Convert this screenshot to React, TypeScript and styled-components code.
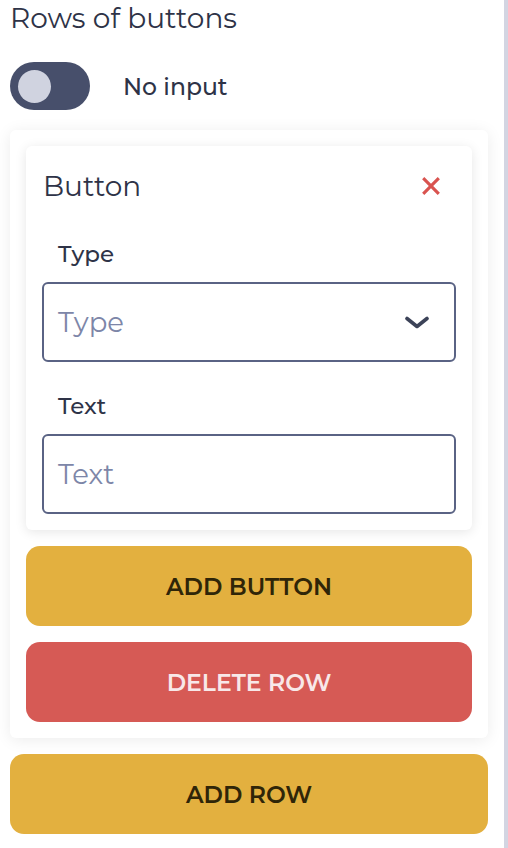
import React from "react";
import styled, { createGlobalStyle } from "styled-components";

const GlobalStyle = createGlobalStyle`
  html, body {
    margin: 0;
    padding: 0;
    background: #ffffff;
  }
  body {
    font-family: "Montserrat", "Open Sans", "DejaVu Sans", sans-serif;
    color: #2e3347;
  }
`;

interface IField {
  label: string;
  placeholder: string;
  select?: boolean;
}

const fields: IField[] = [
  { label: "Type", placeholder: "Type", select: true },
  { label: "Text", placeholder: "Text" },
];

export default function App() {
  const [noInput, setNoInput] = React.useState(false);

  return (
    <S.Page>
      <GlobalStyle />
      <S.Content>
        <S.Title>Rows of buttons</S.Title>
        <S.ToggleRow>
          <S.Toggle $on={noInput} onClick={() => setNoInput(!noInput)}>
            <S.Knob />
          </S.Toggle>
          <S.ToggleLabel>No input</S.ToggleLabel>
        </S.ToggleRow>
        <S.RowCard>
          <S.ButtonCard>
            <S.CardHeader>
              <S.CardTitle>Button</S.CardTitle>
              <S.CloseIcon viewBox="0 0 24 24">
                <path d="M3.5 3.5 L20.5 20.5 M20.5 3.5 L3.5 20.5" />
              </S.CloseIcon>
            </S.CardHeader>
            {fields.map((field) => (
              <S.Field key={field.label}>
                <S.FieldLabel>{field.label}</S.FieldLabel>
                <S.InputBox>
                  <S.Placeholder>{field.placeholder}</S.Placeholder>
                  {field.select && (
                    <S.Chevron viewBox="0 0 26 13">
                      <path d="M3 2.5 L13 10.5 L23 2.5" />
                    </S.Chevron>
                  )}
                </S.InputBox>
              </S.Field>
            ))}
          </S.ButtonCard>
          <S.ActionButton $variant="yellow">ADD BUTTON</S.ActionButton>
          <S.ActionButton $variant="red">DELETE ROW</S.ActionButton>
        </S.RowCard>
        <S.ActionButton $variant="yellow">ADD ROW</S.ActionButton>
      </S.Content>
    </S.Page>
  );
}

const S = {
  Page: styled.div`
    display: flex;
    min-height: 848px;
    border-right: 4px solid #d3d5e2;
    box-sizing: border-box;
    width: 508px;
  `,
  Content: styled.div`
    flex: 1;
    display: flex;
    flex-direction: column;
    padding: 0 16px 0 10px;
  `,
  Title: styled.h2`
    margin: 0;
    font-size: 28px;
    font-weight: 400;
    line-height: 36px;
    color: #2e3347;
  `,
  ToggleRow: styled.div`
    display: flex;
    align-items: center;
    gap: 33px;
    margin-top: 26px;
  `,
  Toggle: styled.div<{ $on: boolean }>`
    width: 80px;
    height: 48px;
    border-radius: 24px;
    background: #474f6b;
    display: flex;
    align-items: center;
    justify-content: ${(p) => (p.$on ? "flex-end" : "flex-start")};
    padding: 0 8px;
    box-sizing: border-box;
    cursor: pointer;
  `,
  Knob: styled.div`
    width: 33px;
    height: 33px;
    border-radius: 50%;
    background: #d0d3e0;
  `,
  ToggleLabel: styled.span`
    font-size: 23.5px;
    font-weight: 500;
    color: #2e3347;
  `,
  RowCard: styled.div`
    margin-top: 20px;
    background: #ffffff;
    border-radius: 6px;
    box-shadow: 0 2px 16px rgba(0, 0, 0, 0.08);
    padding: 16px;
    display: flex;
    flex-direction: column;
    gap: 16px;
    margin-bottom: 16px;
  `,
  ButtonCard: styled.div`
    background: #ffffff;
    border-radius: 6px;
    box-shadow: 0 2px 12px rgba(0, 0, 0, 0.1);
    padding: 16px 16px 16px 16px;
    display: flex;
    flex-direction: column;
  `,
  CardHeader: styled.div`
    display: flex;
    align-items: center;
    justify-content: space-between;
    padding: 0 14px 0 1px;
    height: 48px;
  `,
  CardTitle: styled.span`
    font-size: 28px;
    font-weight: 400;
    color: #2e3347;
  `,
  CloseIcon: styled.svg`
    width: 22px;
    height: 22px;
    stroke: #d9534f;
    stroke-width: 3.4;
    fill: none;
  `,
  Field: styled.div`
    display: flex;
    flex-direction: column;
    margin-top: 30px;
  `,
  FieldLabel: styled.label`
    font-size: 23px;
    font-weight: 500;
    color: #2e3347;
    padding-left: 16px;
    line-height: 28px;
    margin-bottom: 14px;
  `,
  InputBox: styled.div`
    height: 80px;
    box-sizing: border-box;
    border: 2px solid #5a6384;
    border-radius: 6px;
    display: flex;
    align-items: center;
    justify-content: space-between;
    padding: 0 24px 0 14px;
  `,
  Placeholder: styled.span`
    font-size: 27.5px;
    color: #7d86a8;
  `,
  Chevron: styled.svg`
    width: 26px;
    height: 13px;
    stroke: #3c4358;
    stroke-width: 3.6;
    stroke-linecap: round;
    stroke-linejoin: round;
    fill: none;
  `,
  ActionButton: styled.button<{ $variant: "yellow" | "red" }>`
    height: 80px;
    border: none;
    border-radius: 14px;
    background: ${(p) => (p.$variant === "red" ? "#d65a55" : "#e3b03f")};
    color: ${(p) => (p.$variant === "red" ? "#f8e8e8" : "#2f2508")};
    font-family: inherit;
    font-size: 23.5px;
    font-weight: 600;
    cursor: pointer;
  `,
};
